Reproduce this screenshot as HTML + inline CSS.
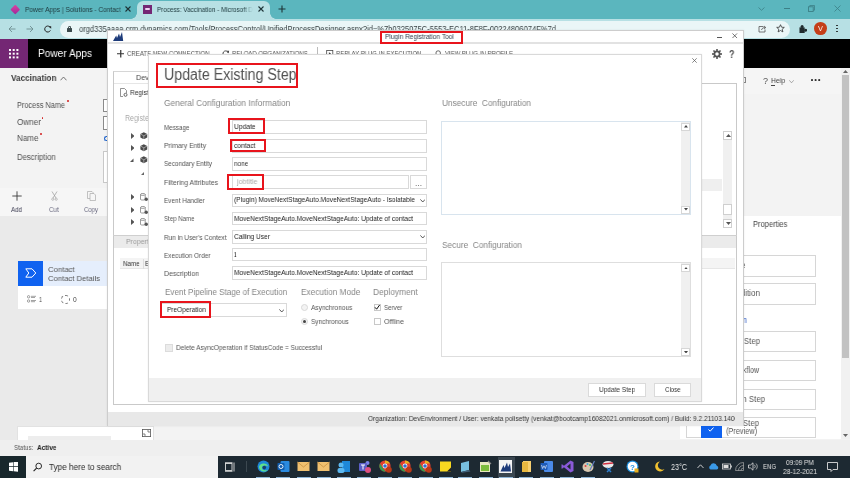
<!DOCTYPE html><html><head><meta charset="utf-8"><style>
html,body{margin:0;padding:0;}
body{width:850px;height:478px;overflow:hidden;position:relative;background:#f3f3f3;font-family:"Liberation Sans",sans-serif;}
.a{position:absolute;box-sizing:border-box;}
.t{position:absolute;white-space:pre;transform-origin:0 0;line-height:1;will-change:transform;}
</style></head><body>

<div class="a" style="left:0px;top:0px;width:850px;height:19px;background:rgb(91,182,190)"></div>
<div class="a" style="left:0px;top:19px;width:850px;height:20px;background:rgb(183,224,228)"></div>
<div class="a" style="left:137px;top:0.5px;width:133px;height:19px;background:rgb(183,224,228);border-radius:6px 6px 0 0"></div>
<div class="a" style="left:131px;top:13px;width:6px;height:6px;background:radial-gradient(circle at 0 0,rgba(183,224,228,0) 5.5px,rgb(183,224,228) 6px)"></div>
<div class="a" style="left:270px;top:13px;width:6px;height:6px;background:radial-gradient(circle at 100% 0,rgba(183,224,228,0) 5.5px,rgb(183,224,228) 6px)"></div>
<div class="a" style="left:12.2px;top:6px;width:6.5px;height:6.5px;background:linear-gradient(135deg,#e040a0,#9c2a9c);transform:rotate(45deg);border-radius:1px"></div>
<div class="t" style="left:24.5px;top:5.8px;font-size:7.2px;color:#203c40;font-weight:normal;transform:scaleX(0.915);">Power Apps | Solutions - Contact</div>
<div class="a" style="left:118px;top:3px;width:8px;height:13px;background:linear-gradient(90deg,rgba(91,182,190,0),rgb(91,182,190))"></div>
<svg class="a" style="left:125.3px;top:6.4px" width="6" height="6" viewBox="0 0 6 6"><path d="M0.5 0.5L5.5 5.5M5.5 0.5L0.5 5.5" stroke="#1d3336" stroke-width="1.1"/></svg>
<div class="a" style="left:143.3px;top:5px;width:8.8px;height:8.5px;background:#742774"></div>
<div class="a" style="left:145px;top:8.2px;width:5.4px;height:2.2px;background:#f0d0f0;border-radius:1px"></div>
<div class="t" style="left:156.8px;top:5.8px;font-size:7.2px;color:#203c40;font-weight:normal;transform:scaleX(0.878);">Process: Vaccination - Microsoft D</div>
<div class="a" style="left:243px;top:3px;width:10px;height:13px;background:linear-gradient(90deg,rgba(183,224,228,0),rgb(183,224,228))"></div>
<svg class="a" style="left:257.5px;top:6.4px" width="6" height="6" viewBox="0 0 6 6"><path d="M0.5 0.5L5.5 5.5M5.5 0.5L0.5 5.5" stroke="#1d3336" stroke-width="1.1"/></svg>
<svg class="a" style="left:277.7px;top:5.4px" width="8" height="8" viewBox="0 0 8 8"><path d="M4 0.5V7.5M0.5 4H7.5" stroke="#1d3336" stroke-width="1.1"/></svg>
<svg class="a" style="left:757.5px;top:6.5px" width="7" height="4" viewBox="0 0 7 4"><path d="M0.5 0.5L3.5 3.3L6.5 0.5" stroke="#3c8087" stroke-width="0.8" fill="none"/></svg>
<div class="a" style="left:783.5px;top:8px;width:6.5px;height:0.9px;background:#3c8087"></div>
<svg class="a" style="left:808px;top:5.3px" width="7" height="7" viewBox="0 0 7 7"><rect x="0.5" y="1.8" width="4.7" height="4.7" stroke="#3c8087" stroke-width="0.9" fill="none"/><path d="M1.8 1.8V0.5H6.5V5.2H5.2" stroke="#3c8087" stroke-width="0.8" fill="none"/></svg>
<svg class="a" style="left:833.5px;top:5px" width="7" height="7" viewBox="0 0 7 7"><path d="M0.5 0.5L6.5 6.5M6.5 0.5L0.5 6.5" stroke="#3c8087" stroke-width="0.8"/></svg>
<svg class="a" style="left:8px;top:24.6px" width="8" height="8" viewBox="0 0 8 8"><path d="M7.5 4H1M4 1L1 4L4 7" stroke="#6d8d90" stroke-width="0.9" fill="none"/></svg>
<svg class="a" style="left:26px;top:24.6px" width="8" height="8" viewBox="0 0 8 8"><path d="M0.5 4H7M4 1L7 4L4 7" stroke="#6d8d90" stroke-width="0.9" fill="none"/></svg>
<svg class="a" style="left:43.5px;top:24.5px" width="8" height="8" viewBox="0 0 8 8"><path d="M6.6 3.2A3 3 0 1 0 6.4 5.4" stroke="#222" stroke-width="1" fill="none"/><path d="M5 1.2L7.2 1.2L7.2 3.6Z" fill="#222"/></svg>
<div class="a" style="left:60px;top:21px;width:730px;height:16.5px;background:rgb(234,246,247);border-radius:8.5px"></div>
<div class="a" style="left:67px;top:28px;width:5px;height:4px;background:#3b4a4c;border-radius:0.5px"></div>
<div class="a" style="left:67.9px;top:25.6px;width:3.2px;height:3.5px;border:0.9px solid #3b4a4c;border-bottom:none;border-radius:2px 2px 0 0"></div>
<div class="t" style="left:78.5px;top:24.78px;font-size:9px;color:#3a4446;font-weight:normal;transform:scaleX(0.839);">orgd335aaaa.crm.dynamics.com/Tools/ProcessControl/UnifiedProcessDesigner.aspx?id=%7b0325075C-5553-EC11-8F8F-00224806074F%7d</div>
<svg class="a" style="left:757.5px;top:24.5px" width="9" height="8" viewBox="0 0 9 8"><path d="M5.5 1.5H1V7H7V4.5" stroke="#555" stroke-width="0.8" fill="none"/><path d="M3.5 5C4 3 5.5 2.5 7.5 2.5M6 1L7.8 2.5L6 4" stroke="#555" stroke-width="0.8" fill="none"/></svg>
<svg class="a" style="left:775.5px;top:24.3px" width="9" height="9" viewBox="0 0 9 9"><path d="M4.5 0.7L5.6 3.2L8.3 3.4L6.2 5.2L6.9 7.9L4.5 6.5L2.1 7.9L2.8 5.2L0.7 3.4L3.4 3.2Z" stroke="#333" stroke-width="0.8" fill="none"/></svg>
<svg class="a" style="left:798.5px;top:24.8px" width="8.5" height="8.5" viewBox="0 0 9 9"><rect x="0.5" y="2.5" width="5.5" height="6" fill="#1f2a2c"/><circle cx="3.3" cy="1.7" r="1.6" fill="#1f2a2c"/><circle cx="7" cy="5.5" r="1.6" fill="#1f2a2c"/></svg>
<div class="a" style="left:814.2px;top:22.3px;width:12.8px;height:12.8px;border-radius:50%;background:rgb(196,62,24)"></div>
<div class="t" style="left:818.3px;top:25.45px;font-size:7.5px;color:#fff;font-weight:normal;transform:scaleX(0.957);">V</div>
<div class="a" style="left:836.3px;top:24.5px;width:1.8px;height:1.8px;border-radius:50%;background:#222;box-shadow:0 3px 0 #222,0 6px 0 #222"></div>
<div class="a" style="left:0px;top:39px;width:850px;height:28.5px;background:#000"></div>
<div class="a" style="left:0px;top:39px;width:28px;height:28.5px;background:rgb(116,39,116)"></div>
<div class="a" style="left:9px;top:48.5px;width:2.4px;height:2.4px;background:#fff;box-shadow:3.7px 0 #fff,7.4px 0 #fff,0 3.7px #fff,3.7px 3.7px #fff,7.4px 3.7px #fff,0 7.4px #fff,3.7px 7.4px #fff,7.4px 7.4px #fff"></div>
<div class="t" style="left:37.7px;top:47.82px;font-size:10.6px;color:#fff;font-weight:normal;transform:scaleX(0.955);">Power Apps</div>
<div class="a" style="left:0px;top:67.5px;width:850px;height:372.5px;background:#f3f3f3"></div>
<div class="t" style="left:11.3px;top:74.48px;font-size:9px;color:#3a3a3a;font-weight:bold;transform:scaleX(0.909);">Vaccination</div>
<svg class="a" style="left:60px;top:75.5px" width="7" height="5" viewBox="0 0 7 5"><path d="M0.5 4.3L3.5 1L6.5 4.3" stroke="#555" stroke-width="0.8" fill="none"/></svg>
<div class="t" style="left:16.9px;top:101.2px;font-size:8.5px;color:#505050;font-weight:normal;transform:scaleX(0.861);">Process Name</div>
<div class="t" style="left:16.9px;top:118px;font-size:8.5px;color:#505050;font-weight:normal;transform:scaleX(0.958);">Owner</div>
<div class="t" style="left:16.9px;top:134.1px;font-size:8.5px;color:#505050;font-weight:normal;transform:scaleX(0.948);">Name</div>
<div class="t" style="left:16.9px;top:152.6px;font-size:8.5px;color:#505050;font-weight:normal;transform:scaleX(0.912);">Description</div>
<div class="a" style="left:67.2px;top:100.2px;width:1.9px;height:1.9px;border-radius:50%;background:#d32020"></div>
<div class="a" style="left:41.6px;top:117px;width:1.9px;height:1.9px;border-radius:50%;background:#d32020"></div>
<div class="a" style="left:39.8px;top:133.4px;width:1.9px;height:1.9px;border-radius:50%;background:#d32020"></div>
<div class="a" style="left:103.3px;top:98.8px;width:8.7px;height:13.4px;background:#fff;border:1px solid #8a8a8a"></div>
<div class="a" style="left:103.3px;top:116px;width:8.7px;height:14px;background:#fff;border:1px solid #8a8a8a"></div>
<div class="a" style="left:103.3px;top:150.6px;width:8.7px;height:32.8px;background:#fff;border:1px solid #c8c8c8"></div>
<div class="a" style="left:104px;top:136px;width:3px;height:5px;border:1px solid #2266cc;border-right:none;border-radius:3px 0 0 3px"></div>
<div class="a" style="left:0px;top:188px;width:107px;height:28px;background:#f6f6f6"></div>
<svg class="a" style="left:11.5px;top:191px" width="10" height="10" viewBox="0 0 10 10"><path d="M5 0.3V9.7M0.3 5H9.7" stroke="#3a3a3a" stroke-width="0.9"/></svg>
<div class="t" style="left:11px;top:205.97px;font-size:7px;color:#3a3a50;font-weight:normal;transform:scaleX(0.882);">Add</div>
<svg class="a" style="left:50.5px;top:191px" width="7" height="10" viewBox="0 0 7 10"><path d="M1 0.5L5 7M6 0.5L2 7" stroke="#9a9a9a" stroke-width="0.7" fill="none"/><circle cx="1.8" cy="8.2" r="1.1" stroke="#9a9a9a" stroke-width="0.6" fill="none"/><circle cx="5.2" cy="8.2" r="1.1" stroke="#9a9a9a" stroke-width="0.6" fill="none"/></svg>
<div class="t" style="left:48.9px;top:205.97px;font-size:7px;color:#6a6a80;font-weight:normal;transform:scaleX(0.880);">Cut</div>
<svg class="a" style="left:86.5px;top:191px" width="9" height="10" viewBox="0 0 9 10"><path d="M0.5 0.5H5L6 1.5V7.5H0.5Z" stroke="#aaa" stroke-width="0.7" fill="none"/><path d="M3 2.5H7L8.5 4V9.5H3Z" stroke="#aaa" stroke-width="0.7" fill="#f6f6f6"/></svg>
<div class="t" style="left:83.9px;top:205.97px;font-size:7px;color:#6a6a80;font-weight:normal;transform:scaleX(0.857);">Copy</div>
<div class="a" style="left:0px;top:216px;width:107px;height:224px;background:#eaeaea"></div>
<div class="a" style="left:17.6px;top:261px;width:89.4px;height:48.3px;background:#fff"></div>
<div class="a" style="left:42.8px;top:261px;width:64.2px;height:24.9px;background:#e5eefc"></div>
<div class="a" style="left:17.6px;top:261px;width:25.2px;height:24.9px;background:#0f62f0"></div>
<svg class="a" style="left:24.5px;top:268px" width="12" height="10" viewBox="0 0 12 10"><path d="M0.8 0.8H7L10.8 5L7 9.2H0.8L3.8 5Z" stroke="#fff" stroke-width="1" fill="none"/></svg>
<div class="t" style="left:48px;top:266.03px;font-size:8px;color:#555;font-weight:normal;transform:scaleX(0.968);">Contact</div>
<div class="t" style="left:48px;top:274.93px;font-size:8px;color:#555;font-weight:normal;transform:scaleX(0.959);">Contact Details</div>
<svg class="a" style="left:27px;top:295px" width="11" height="8" viewBox="0 0 11 8"><circle cx="1.6" cy="1.8" r="1.2" stroke="#666" stroke-width="0.6" fill="none"/><circle cx="1.6" cy="6" r="1.2" stroke="#666" stroke-width="0.6" fill="none"/><path d="M4 1.3H9M4 2.5H8M4 5.5H9M4 6.7H8" stroke="#666" stroke-width="0.6"/></svg>
<div class="t" style="left:38.8px;top:296.5px;font-size:6.5px;color:#444;font-weight:normal;transform:scaleX(0.828);">1</div>
<div class="a" style="left:61.3px;top:294.5px;width:9px;height:9px;border-radius:50%;border:1px dashed #777"></div>
<div class="t" style="left:73.2px;top:296.5px;font-size:6.5px;color:#444;font-weight:normal;transform:scaleX(1.021);">0</div>
<div class="a" style="left:17px;top:425.6px;width:137.4px;height:14.4px;background:#fff;border:1px solid #e2e2e2;border-bottom:none"></div>
<div class="a" style="left:27.9px;top:435.5px;width:82.8px;height:4.5px;background:#ededed"></div>
<svg class="a" style="left:142px;top:429px" width="9" height="8" viewBox="0 0 9 8"><rect x="0.4" y="0.4" width="8.2" height="7.2" stroke="#555" stroke-width="0.8" fill="none"/><path d="M2 4V6H4M5 2H7V4" stroke="#555" stroke-width="0.7" fill="none"/></svg>
<div class="a" style="left:0px;top:440px;width:850px;height:15.5px;background:#efefef"></div>
<div class="t" style="left:13.7px;top:444.25px;font-size:7.5px;color:#555;font-weight:normal;transform:scaleX(0.826);">Status:</div>
<div class="t" style="left:37px;top:444.25px;font-size:7.5px;color:#222;font-weight:bold;transform:scaleX(0.866);">Active</div>
<div class="a" style="left:743px;top:67.5px;width:107px;height:26px;background:#f5f5f5"></div>
<div class="a" style="left:743px;top:77px;width:3px;height:6px;border:0.8px solid #888;border-left:none"></div>
<div class="t" style="left:762.5px;top:76.88px;font-size:9px;color:#555;font-weight:normal;transform:scaleX(0.997);">?</div>
<div class="t" style="left:771.4px;top:77.23px;font-size:8px;color:#444;font-weight:normal;transform:scaleX(0.863);">Help</div>
<div class="a" style="left:771.4px;top:85.2px;width:3.5px;height:0.6px;background:#444"></div>
<svg class="a" style="left:788.5px;top:80px" width="5" height="3.5" viewBox="0 0 5 3.5"><path d="M0.3 0.3L2.5 2.8L4.7 0.3" stroke="#777" stroke-width="0.6" fill="none"/></svg>
<div class="a" style="left:811px;top:79.2px;width:1.7px;height:1.7px;border-radius:50%;background:#333;box-shadow:3.6px 0 #333,7.2px 0 #333"></div>
<div class="a" style="left:841.3px;top:67.5px;width:8.7px;height:371.3px;background:#f1f1f1"></div>
<div class="a" style="left:841.5px;top:75.4px;width:7.3px;height:283.1px;background:#c2c2c2"></div>
<svg class="a" style="left:842.8px;top:69.5px" width="5" height="3" viewBox="0 0 5 3"><path d="M0 3L2.5 0L5 3Z" fill="#666"/></svg>
<svg class="a" style="left:842.8px;top:433.5px" width="5" height="3" viewBox="0 0 5 3"><path d="M0 0L2.5 3L5 0Z" fill="#666"/></svg>
<div class="a" style="left:680px;top:215.6px;width:161.3px;height:223.2px;background:#fff"></div>
<div class="t" style="left:752.6px;top:219.62px;font-size:8.6px;color:#444;font-weight:normal;transform:scaleX(0.878);">Properties</div>
<div class="a" style="left:686px;top:254.5px;width:130.3px;height:22.1px;border:1px solid #d6d6d6;background:#fff"></div>
<div class="a" style="left:686px;top:283.4px;width:130.3px;height:22.1px;border:1px solid #d6d6d6;background:#fff"></div>
<div class="a" style="left:686px;top:330.8px;width:130.3px;height:21.7px;border:1px solid #d6d6d6;background:#fff"></div>
<div class="a" style="left:686px;top:359.5px;width:130.3px;height:21.8px;border:1px solid #d6d6d6;background:#fff"></div>
<div class="a" style="left:686px;top:388.6px;width:130.3px;height:21.8px;border:1px solid #d6d6d6;background:#fff"></div>
<div class="a" style="left:686px;top:417px;width:130.3px;height:21.3px;border:1px solid #d6d6d6;background:#fff"></div>
<div class="t" style="left:723.03px;top:261.22px;font-size:8.6px;color:#555;font-weight:normal;">Stage</div>
<div class="t" style="left:725.7px;top:289.22px;font-size:8.6px;color:#555;font-weight:normal;transform:scaleX(0.936);">Condition</div>
<div class="t" style="left:703.5px;top:315.82px;font-size:8.6px;color:#2050c0;font-weight:normal;transform:scaleX(0.900);">Composition</div>
<div class="t" style="left:719.6px;top:337.22px;font-size:8.6px;color:#555;font-weight:normal;transform:scaleX(0.910);">Action Step</div>
<div class="t" style="left:729.8px;top:365.92px;font-size:8.6px;color:#555;font-weight:normal;transform:scaleX(0.824);">Workflow</div>
<div class="t" style="left:725.3px;top:394.92px;font-size:8.6px;color:#555;font-weight:normal;transform:scaleX(0.910);">Action Step</div>
<div class="t" style="left:718.8px;top:419.12px;font-size:8.6px;color:#555;font-weight:normal;transform:scaleX(0.910);">Action Step</div>
<div class="t" style="left:725.9px;top:427.12px;font-size:8.6px;color:#555;font-weight:normal;transform:scaleX(0.854);">(Preview)</div>
<div class="a" style="left:701px;top:425.4px;width:21.4px;height:12.9px;background:#0f62f0"></div>
<svg class="a" style="left:708px;top:427px" width="6" height="5" viewBox="0 0 6 5"><path d="M0.5 2.5L2.2 4.2L5.5 0.5" stroke="#fff" stroke-width="1" fill="none"/></svg>
<div class="a" style="left:106.5px;top:29.5px;width:637.2px;height:396.8px;background:#fff;border:1px solid #cdcdcd;box-shadow:0 0 2px rgba(0,0,0,0.08)"></div>
<div class="a" style="left:107.5px;top:42.3px;width:635.2px;height:1.3px;background:#e2e2e2"></div>
<svg class="a" style="left:112.5px;top:32px" width="11" height="9" viewBox="0 0 11 9"><path d="M0 9L3.2 3.5L4 6L6 1.5L7 5L9 0L10.2 9Z" fill="#1d3b7a"/></svg>
<div class="a" style="left:380px;top:30.6px;width:83.1px;height:13.1px;border:2px solid #e8141c"></div>
<div class="t" style="left:385.1px;top:32.95px;font-size:7.5px;color:#2c3a4a;font-weight:normal;transform:scaleX(0.875);">Plugin Registration Tool</div>
<div class="a" style="left:717.2px;top:37px;width:4.4px;height:1.2px;background:#555"></div>
<svg class="a" style="left:732px;top:33.3px" width="5.5" height="5.5" viewBox="0 0 6 6"><path d="M0.5 0.5L5.5 5.5M5.5 0.5L0.5 5.5" stroke="#444" stroke-width="0.8"/></svg>
<svg class="a" style="left:116.7px;top:50px" width="7.5" height="7.5" viewBox="0 0 8 8"><path d="M4 0V8M0 4H8" stroke="#333" stroke-width="1.3"/></svg>
<div class="t" style="left:126.7px;top:49.92px;font-size:7.3px;color:#555;font-weight:normal;transform:scaleX(0.832);">CREATE NEW CONNECTION</div>
<svg class="a" style="left:222px;top:50px" width="7.5" height="7" viewBox="0 0 8 8"><path d="M6.8 3.5A3 3 0 1 0 6.3 5.8" stroke="#444" stroke-width="1.1" fill="none"/><path d="M5 0.8L7.8 0.8L7.5 3.8Z" fill="#444"/></svg>
<div class="t" style="left:231.5px;top:49.92px;font-size:7.3px;color:#555;font-weight:normal;transform:scaleX(0.824);">RELOAD ORGANIZATIONS</div>
<div class="a" style="left:317px;top:47px;width:1px;height:9.5px;background:#bbb"></div>
<svg class="a" style="left:326px;top:50px" width="7.5" height="7" viewBox="0 0 8 8"><rect x="0.5" y="0.5" width="7" height="7" stroke="#444" stroke-width="0.9" fill="none"/><path d="M3 2.5L5.5 4L3 5.5Z" fill="#444"/></svg>
<div class="t" style="left:336px;top:49.92px;font-size:7.3px;color:#555;font-weight:normal;transform:scaleX(0.817);">REPLAY PLUG-IN EXECUTION</div>
<svg class="a" style="left:433.8px;top:50px" width="7.5" height="7" viewBox="0 0 8 8"><circle cx="4.5" cy="3.5" r="2.6" stroke="#444" stroke-width="0.9" fill="none"/><path d="M2.5 5.5L0.5 7.5" stroke="#444" stroke-width="1.1"/></svg>
<div class="t" style="left:444.5px;top:49.92px;font-size:7.3px;color:#555;font-weight:normal;transform:scaleX(0.814);">VIEW PLUG-IN PROFILE</div>
<svg class="a" style="left:712px;top:49px" width="10" height="10" viewBox="0 0 10 10"><circle cx="5" cy="5" r="2.6" stroke="#555" stroke-width="1.7" fill="none"/><rect x="4.2" y="0" width="1.6" height="2.4" fill="#555" transform="rotate(0 5 5)"/><rect x="4.2" y="0" width="1.6" height="2.4" fill="#555" transform="rotate(45 5 5)"/><rect x="4.2" y="0" width="1.6" height="2.4" fill="#555" transform="rotate(90 5 5)"/><rect x="4.2" y="0" width="1.6" height="2.4" fill="#555" transform="rotate(135 5 5)"/><rect x="4.2" y="0" width="1.6" height="2.4" fill="#555" transform="rotate(180 5 5)"/><rect x="4.2" y="0" width="1.6" height="2.4" fill="#555" transform="rotate(225 5 5)"/><rect x="4.2" y="0" width="1.6" height="2.4" fill="#555" transform="rotate(270 5 5)"/><rect x="4.2" y="0" width="1.6" height="2.4" fill="#555" transform="rotate(315 5 5)"/></svg>
<div class="t" style="left:728.8px;top:50.13px;font-size:10px;color:#4a4a4a;font-weight:bold;transform:scaleX(0.884);">?</div>
<div class="a" style="left:113.4px;top:83.3px;width:623.2px;height:321.5px;border:1px solid #c9c9c9;background:#fff"></div>
<div class="a" style="left:113.4px;top:70.7px;width:46.6px;height:13.6px;border:1px solid #c9c9c9;border-top:1.5px solid #d6d6d6;border-bottom:none;background:#fff"></div>
<div class="t" style="left:135.9px;top:74.3px;font-size:7.8px;color:#444;font-weight:normal;transform:scaleX(0.929);">Devl</div>
<div class="a" style="left:114.4px;top:83.1px;width:34px;height:1px;background:#e6e6e6"></div>
<svg class="a" style="left:120.3px;top:87.8px" width="8" height="9" viewBox="0 0 8 9"><path d="M0.5 0.5H4.5L6.5 2.5V5M0.5 0.5V8.5H3" stroke="#666" stroke-width="0.7" fill="none"/><circle cx="5.5" cy="6.8" r="1.5" stroke="#555" stroke-width="0.9" fill="none"/></svg>
<div class="t" style="left:129.8px;top:88.65px;font-size:7.5px;color:#333;font-weight:normal;transform:scaleX(0.877);">Register</div>
<div class="t" style="left:124.8px;top:113.26px;font-size:9.5px;color:#a8a8a8;font-weight:normal;transform:scaleX(0.740);">Registered</div>
<svg class="a" style="left:130.6px;top:132.7px" width="3.5" height="6" viewBox="0 0 3.5 6"><path d="M0 0L3.5 3L0 6Z" fill="#555"/></svg>
<svg class="a" style="left:140px;top:131.89999999999998px" width="7.6" height="7.6" viewBox="0 0 8 8"><path d="M4 0.3L7.6 2.1V5.9L4 7.7L0.4 5.9V2.1Z" fill="#4a4a4a"/><path d="M0.6 2.2L4 4L7.4 2.2M4 4V7.6" stroke="#ddd" stroke-width="0.6" fill="none"/></svg>
<svg class="a" style="left:130.6px;top:145px" width="3.5" height="6" viewBox="0 0 3.5 6"><path d="M0 0L3.5 3L0 6Z" fill="#555"/></svg>
<svg class="a" style="left:140px;top:144.2px" width="7.6" height="7.6" viewBox="0 0 8 8"><path d="M4 0.3L7.6 2.1V5.9L4 7.7L0.4 5.9V2.1Z" fill="#4a4a4a"/><path d="M0.6 2.2L4 4L7.4 2.2M4 4V7.6" stroke="#ddd" stroke-width="0.6" fill="none"/></svg>
<svg class="a" style="left:129.8px;top:158.2px" width="4" height="4" viewBox="0 0 4 4"><path d="M0 4H3.5V0.5Z" fill="#555"/></svg>
<svg class="a" style="left:140px;top:156.39999999999998px" width="7.6" height="7.6" viewBox="0 0 8 8"><path d="M4 0.3L7.6 2.1V5.9L4 7.7L0.4 5.9V2.1Z" fill="#4a4a4a"/><path d="M0.6 2.2L4 4L7.4 2.2M4 4V7.6" stroke="#ddd" stroke-width="0.6" fill="none"/></svg>
<svg class="a" style="left:140.5px;top:171.5px" width="3" height="3" viewBox="0 0 3 3"><path d="M0 3H3V0Z" fill="#666"/></svg>
<svg class="a" style="left:130.6px;top:194.4px" width="3.5" height="6" viewBox="0 0 3.5 6"><path d="M0 0L3.5 3L0 6Z" fill="#555"/></svg>
<svg class="a" style="left:140px;top:193.20000000000002px" width="8.5" height="8.5" viewBox="0 0 9 9"><path d="M0.5 1.5V6.8C0.5 7.7 5.5 7.7 5.5 6.8V1.5" stroke="#666" stroke-width="0.7" fill="#fff"/><ellipse cx="3" cy="1.5" rx="2.5" ry="1" stroke="#666" stroke-width="0.7" fill="#fff"/><circle cx="6.6" cy="6.6" r="1.8" fill="#555"/></svg>
<svg class="a" style="left:130.6px;top:206.8px" width="3.5" height="6" viewBox="0 0 3.5 6"><path d="M0 0L3.5 3L0 6Z" fill="#555"/></svg>
<svg class="a" style="left:140px;top:205.60000000000002px" width="8.5" height="8.5" viewBox="0 0 9 9"><path d="M0.5 1.5V6.8C0.5 7.7 5.5 7.7 5.5 6.8V1.5" stroke="#666" stroke-width="0.7" fill="#fff"/><ellipse cx="3" cy="1.5" rx="2.5" ry="1" stroke="#666" stroke-width="0.7" fill="#fff"/><circle cx="6.6" cy="6.6" r="1.8" fill="#555"/></svg>
<svg class="a" style="left:130.6px;top:219.2px" width="3.5" height="6" viewBox="0 0 3.5 6"><path d="M0 0L3.5 3L0 6Z" fill="#555"/></svg>
<svg class="a" style="left:140px;top:218.0px" width="8.5" height="8.5" viewBox="0 0 9 9"><path d="M0.5 1.5V6.8C0.5 7.7 5.5 7.7 5.5 6.8V1.5" stroke="#666" stroke-width="0.7" fill="#fff"/><ellipse cx="3" cy="1.5" rx="2.5" ry="1" stroke="#666" stroke-width="0.7" fill="#fff"/><circle cx="6.6" cy="6.6" r="1.8" fill="#555"/></svg>
<div class="a" style="left:113.4px;top:234.7px;width:623.2px;height:1px;background:#cfcfcf"></div>
<div class="a" style="left:114.4px;top:235.7px;width:621.2px;height:12.2px;background:#ebebeb"></div>
<div class="t" style="left:125.7px;top:237.53px;font-size:8px;color:#9a9a9a;font-weight:normal;transform:scaleX(0.864);">Properties</div>
<div class="a" style="left:120px;top:257.7px;width:615px;height:11.6px;background:#f4f4f4;border-bottom:1px solid #e6e6e6"></div>
<div class="t" style="left:122.8px;top:260.02px;font-size:7.3px;color:#333;font-weight:normal;transform:scaleX(0.848);">Name</div>
<div class="a" style="left:143px;top:258.5px;width:0.7px;height:10.5px;background:#ddd"></div>
<div class="t" style="left:145.4px;top:260.02px;font-size:7.3px;color:#333;font-weight:normal;transform:scaleX(0.821);">E</div>
<div class="a" style="left:701.6px;top:178.6px;width:20.4px;height:12.6px;background:#efefef"></div>
<div class="a" style="left:723.4px;top:131.4px;width:9.1px;height:96.6px;background:#f0f0f0"></div>
<div class="a" style="left:723.4px;top:131.4px;width:9.1px;height:8.2px;background:#fff;border:1px solid #cfcfcf"></div>
<svg class="a" style="left:725.5px;top:134.0px" width="5" height="3" viewBox="0 0 5 3"><path d="M0 3L2.5 0L5 3Z" fill="#555"/></svg>
<div class="a" style="left:723.4px;top:219.3px;width:9.1px;height:8.7px;background:#fff;border:1px solid #cfcfcf"></div>
<svg class="a" style="left:725.5px;top:222.15px" width="5" height="3" viewBox="0 0 5 3"><path d="M0 0L2.5 3L5 0Z" fill="#555"/></svg>
<div class="a" style="left:723.4px;top:204.2px;width:9.1px;height:11.3px;background:#fff;border:1px solid #cfcfcf"></div>
<div class="a" style="left:107.5px;top:411.8px;width:635.2px;height:14px;background:#e8e8e8"></div>
<div class="t" style="left:368px;top:415.15px;font-size:7.5px;color:#333;font-weight:normal;transform:scaleX(0.875);">Organization: DevEnvironment / User: venkata polisetty (venkat@bootcamp16082021.onmicrosoft.com) / Build: 9.2.21103.140</div>
<div class="a" style="left:148.4px;top:53.8px;width:553.3px;height:348.4px;background:#fff;border:1px solid #d9d9d9;box-shadow:0 0 1.5px rgba(0,0,0,0.08)"></div>
<div class="a" style="left:149.4px;top:377.6px;width:551.3px;height:23.6px;background:#f0f0f0"></div>
<svg class="a" style="left:692px;top:58.4px" width="5" height="5" viewBox="0 0 5 5"><path d="M0.3 0.3L4.7 4.7M4.7 0.3L0.3 4.7" stroke="#555" stroke-width="0.7"/></svg>
<div class="a" style="left:156px;top:63.3px;width:141.9px;height:25.1px;border:2px solid #e8141c"></div>
<div class="t" style="left:164.3px;top:67.35px;font-size:16px;color:#525252;font-weight:normal;transform:scaleX(0.887);">Update Existing Step</div>
<div class="t" style="left:164.4px;top:98.58px;font-size:9px;color:#868686;font-weight:normal;transform:scaleX(0.932);">General Configuration Information</div>
<div class="t" style="left:164.3px;top:124.12px;font-size:7.3px;color:#555;font-weight:normal;transform:scaleX(0.858);">Message</div>
<div class="t" style="left:164.3px;top:142.02px;font-size:7.3px;color:#555;font-weight:normal;transform:scaleX(0.925);">Primary Entity</div>
<div class="t" style="left:164.3px;top:160.32px;font-size:7.3px;color:#555;font-weight:normal;transform:scaleX(0.870);">Secondary Entity</div>
<div class="t" style="left:164.3px;top:178.82px;font-size:7.3px;color:#555;font-weight:normal;transform:scaleX(0.925);">Filtering Attributes</div>
<div class="t" style="left:164.3px;top:196.62px;font-size:7.3px;color:#555;font-weight:normal;transform:scaleX(0.882);">Event Handler</div>
<div class="t" style="left:164.3px;top:214.82px;font-size:7.3px;color:#555;font-weight:normal;transform:scaleX(0.835);">Step Name</div>
<div class="t" style="left:164.3px;top:233.62px;font-size:7.3px;color:#555;font-weight:normal;transform:scaleX(0.882);">Run in User&#x27;s Context</div>
<div class="t" style="left:164.3px;top:251.62px;font-size:7.3px;color:#555;font-weight:normal;transform:scaleX(0.882);">Execution Order</div>
<div class="t" style="left:164.3px;top:269.82px;font-size:7.3px;color:#555;font-weight:normal;transform:scaleX(0.959);">Description</div>
<div class="a" style="left:232.2px;top:120.3px;width:195.1px;height:13.5px;border:1px solid #d9d9d9;background:#fff"></div>
<div class="a" style="left:232.2px;top:139px;width:195.1px;height:13.5px;border:1px solid #d9d9d9;background:#fff"></div>
<div class="a" style="left:232.2px;top:157px;width:195.1px;height:13.5px;border:1px solid #d9d9d9;background:#fff"></div>
<div class="a" style="left:232.2px;top:175.4px;width:176.6px;height:13.5px;border:1px solid #d9d9d9;background:#fff"></div>
<div class="a" style="left:232.2px;top:193.5px;width:195.1px;height:13.5px;border:1px solid #d9d9d9;background:#fff"></div>
<div class="a" style="left:232.2px;top:211.8px;width:195.1px;height:13.5px;border:1px solid #d9d9d9;background:#fff"></div>
<div class="a" style="left:232.2px;top:230.1px;width:195.1px;height:13.5px;border:1px solid #d9d9d9;background:#fff"></div>
<div class="a" style="left:232.2px;top:247.9px;width:195.1px;height:13.5px;border:1px solid #d9d9d9;background:#fff"></div>
<div class="a" style="left:232.2px;top:266.2px;width:195.1px;height:13.5px;border:1px solid #d9d9d9;background:#fff"></div>
<div class="a" style="left:410px;top:175.4px;width:17.3px;height:13.5px;border:1px solid #d9d9d9;background:#fff"></div>
<div class="t" style="left:415.2px;top:179.82px;font-size:7.3px;color:#333;font-weight:normal;transform:scaleX(1.149);">...</div>
<div class="t" style="left:234.2px;top:123.17px;font-size:7.6px;color:#222;font-weight:normal;transform:scaleX(0.878);">Update</div>
<div class="t" style="left:234.2px;top:141.87px;font-size:7.6px;color:#222;font-weight:normal;transform:scaleX(0.878);">contact</div>
<div class="t" style="left:234.2px;top:159.87px;font-size:7.6px;color:#333;font-weight:normal;transform:scaleX(0.846);">none</div>
<div class="t" style="left:236.8px;top:178.27px;font-size:7.6px;color:#aaa;font-weight:normal;transform:scaleX(0.929);">jobtitle</div>
<div class="t" style="left:234.2px;top:196.37px;font-size:7.6px;color:#222;font-weight:normal;transform:scaleX(0.866);">(Plugin) MoveNextStageAuto.MoveNextStageAuto - Isolatable</div>
<div class="t" style="left:234.2px;top:214.67px;font-size:7.6px;color:#222;font-weight:normal;transform:scaleX(0.873);">MoveNextStageAuto.MoveNextStageAuto: Update of contact</div>
<div class="t" style="left:234.2px;top:232.97px;font-size:7.6px;color:#222;font-weight:normal;transform:scaleX(0.870);">Calling User</div>
<div class="t" style="left:234.2px;top:250.77px;font-size:7.6px;color:#222;font-weight:normal;transform:scaleX(0.590);">1</div>
<div class="t" style="left:234.2px;top:269.07px;font-size:7.6px;color:#222;font-weight:normal;transform:scaleX(0.873);">MoveNextStageAuto.MoveNextStageAuto: Update of contact</div>
<svg class="a" style="left:419.5px;top:198.8px" width="5.5" height="3.5" viewBox="0 0 5.5 3.5"><path d="M0.4 0.4L2.75 3L5.1 0.4" stroke="#333" stroke-width="0.8" fill="none"/></svg>
<svg class="a" style="left:419.5px;top:235.4px" width="5.5" height="3.5" viewBox="0 0 5.5 3.5"><path d="M0.4 0.4L2.75 3L5.1 0.4" stroke="#333" stroke-width="0.8" fill="none"/></svg>
<div class="a" style="left:227.5px;top:118.4px;width:37.4px;height:15.5px;border:2px solid #e8141c"></div>
<div class="a" style="left:230px;top:138.5px;width:36px;height:13.3px;border:2px solid #e8141c"></div>
<div class="a" style="left:227px;top:174.3px;width:36.9px;height:15.6px;border:2px solid #e8141c"></div>
<div class="t" style="left:441.8px;top:98.58px;font-size:9px;color:#868686;font-weight:normal;transform:scaleX(0.917);">Unsecure  Configuration</div>
<div class="a" style="left:441.4px;top:120.9px;width:249.6px;height:94.1px;border:1px solid #d8e4ee;background:#fff"></div>
<div class="t" style="left:441.8px;top:240.58px;font-size:9px;color:#868686;font-weight:normal;transform:scaleX(0.919);">Secure  Configuration</div>
<div class="a" style="left:441.4px;top:262.4px;width:249.6px;height:94.8px;border:1px solid #dedede;background:#fff"></div>
<div class="a" style="left:681px;top:121.9px;width:9px;height:92.1px;background:#f0f0f0"></div>
<div class="a" style="left:681px;top:122.5px;width:9px;height:8.2px;background:#fff;border:1px solid #d6d6d6"></div>
<svg class="a" style="left:683.5px;top:125.2px" width="4" height="2.6" viewBox="0 0 4 2.6"><path d="M0 2.6L2 0L4 2.6Z" fill="#444"/></svg>
<div class="a" style="left:681px;top:205.5px;width:9px;height:8.2px;background:#fff;border:1px solid #d6d6d6"></div>
<svg class="a" style="left:683.5px;top:208.4px" width="4" height="2.6" viewBox="0 0 4 2.6"><path d="M0 0L2 2.6L4 0Z" fill="#444"/></svg>
<div class="a" style="left:681px;top:263.4px;width:9px;height:92.8px;background:#f0f0f0"></div>
<div class="a" style="left:681px;top:264px;width:9px;height:8.2px;background:#fff;border:1px solid #d6d6d6"></div>
<svg class="a" style="left:683.5px;top:266.7px" width="4" height="2.6" viewBox="0 0 4 2.6"><path d="M0 2.6L2 0L4 2.6Z" fill="#444"/></svg>
<div class="a" style="left:681px;top:347.7px;width:9px;height:8.2px;background:#fff;border:1px solid #d6d6d6"></div>
<svg class="a" style="left:683.5px;top:350.59999999999997px" width="4" height="2.6" viewBox="0 0 4 2.6"><path d="M0 0L2 2.6L4 0Z" fill="#444"/></svg>
<div class="t" style="left:164.5px;top:288.08px;font-size:9px;color:#868686;font-weight:normal;transform:scaleX(0.902);">Event Pipeline Stage of Execution</div>
<div class="a" style="left:160.6px;top:303px;width:126.5px;height:14px;border:1px solid #d9d9d9;background:#fff"></div>
<svg class="a" style="left:278.8px;top:308.8px" width="5.5" height="3.5" viewBox="0 0 5.5 3.5"><path d="M0.4 0.4L2.75 3L5.1 0.4" stroke="#333" stroke-width="0.8" fill="none"/></svg>
<div class="t" style="left:166.8px;top:305.97px;font-size:7.6px;color:#222;font-weight:normal;transform:scaleX(0.859);">PreOperation</div>
<div class="a" style="left:160px;top:300.6px;width:50.9px;height:17.4px;border:2px solid #e8141c"></div>
<div class="t" style="left:300.9px;top:288.08px;font-size:9px;color:#868686;font-weight:normal;transform:scaleX(0.919);">Execution Mode</div>
<div class="t" style="left:373.3px;top:288.08px;font-size:9px;color:#868686;font-weight:normal;transform:scaleX(0.931);">Deployment</div>
<div class="a" style="left:301px;top:303.8px;width:7.2px;height:7.2px;border-radius:50%;background:#f3f3f3;border:1px solid #d8d8d8"></div>
<div class="a" style="left:301px;top:318.2px;width:7.2px;height:7.2px;border-radius:50%;background:#f3f3f3;border:1px solid #d8d8d8"></div>
<div class="a" style="left:303.1px;top:320.3px;width:3px;height:3px;border-radius:50%;background:#444"></div>
<div class="t" style="left:311.2px;top:304.02px;font-size:7.3px;color:#555;font-weight:normal;transform:scaleX(0.895);">Asynchronous</div>
<div class="t" style="left:311.2px;top:318.42px;font-size:7.3px;color:#555;font-weight:normal;transform:scaleX(0.883);">Synchronous</div>
<div class="a" style="left:373.8px;top:303.8px;width:7.2px;height:7.2px;border:1px solid #c8c8c8;background:#fff"></div>
<svg class="a" style="left:374.3px;top:304.3px" width="6.5" height="6.5" viewBox="0 0 6.5 6.5"><path d="M1 3.3L2.6 5.2L5.6 1" stroke="#111" stroke-width="1" fill="none"/></svg>
<div class="a" style="left:373.8px;top:318.3px;width:7.2px;height:7.2px;border:1px solid #c8c8c8;background:#fff"></div>
<div class="t" style="left:383.9px;top:304.02px;font-size:7.3px;color:#555;font-weight:normal;transform:scaleX(0.860);">Server</div>
<div class="t" style="left:383.9px;top:318.42px;font-size:7.3px;color:#555;font-weight:normal;transform:scaleX(0.949);">Offline</div>
<div class="a" style="left:165px;top:344.4px;width:7.6px;height:7.2px;border:1px solid #dcdcdc;background:#ececec"></div>
<div class="t" style="left:175.6px;top:344.42px;font-size:7.3px;color:#555;font-weight:normal;transform:scaleX(0.890);">Delete AsyncOperation if StatusCode = Successful</div>
<div class="a" style="left:588.2px;top:383.2px;width:57.4px;height:13.4px;border:1px solid #dadada;background:#fff"></div>
<div class="t" style="left:598.8px;top:386.45px;font-size:7.5px;color:#333;font-weight:normal;transform:scaleX(0.868);">Update Step</div>
<div class="a" style="left:654.4px;top:383.2px;width:36.5px;height:13.4px;border:1px solid #dadada;background:#fff"></div>
<div class="t" style="left:665px;top:386.45px;font-size:7.5px;color:#333;font-weight:normal;transform:scaleX(0.808);">Close</div>
<div class="a" style="left:0px;top:455.5px;width:850px;height:22.5px;background:rgb(29,41,50)"></div>
<div class="a" style="left:0px;top:455.5px;width:26.4px;height:22.5px;background:rgb(24,39,44)"></div>
<svg class="a" style="left:8.9px;top:462.4px" width="9.5" height="9.5" viewBox="0 0 10 10"><path d="M0 0.8L4.4 0.2V4.6H0ZM5 0.1L10 -0.5V4.6H5ZM0 5.2H4.4V9.7L0 9.1ZM5 5.2H10V10.3L5 9.8Z" fill="#fff"/></svg>
<div class="a" style="left:26.4px;top:455.5px;width:191.2px;height:22.5px;background:#f2f2f2"></div>
<svg class="a" style="left:33px;top:462px" width="9.5" height="10" viewBox="0 0 10 10"><circle cx="6" cy="4" r="3" stroke="#222" stroke-width="1" fill="none"/><path d="M3.8 6.2L0.6 9.4" stroke="#222" stroke-width="1.2"/></svg>
<div class="t" style="left:49px;top:462.73px;font-size:9.3px;color:#2a2a2a;font-weight:normal;transform:scaleX(0.879);">Type here to search</div>
<svg class="a" style="left:224.5px;top:462px" width="11" height="10" viewBox="0 0 11 10"><rect x="0.5" y="1.5" width="6.5" height="7" stroke="#ddd" stroke-width="0.9" fill="none"/><path d="M9 0.5V9.5M0 0.3H7.5M0 9.7H7.5" stroke="#ddd" stroke-width="0.9"/></svg>
<div class="a" style="left:246.2px;top:461px;width:0.8px;height:11px;background:#3c4850"></div>
<svg class="a" style="left:256.9px;top:460.0px" width="13" height="13" viewBox="0 0 13 13"><circle cx="6.5" cy="6.5" r="6" fill="#1e88d8"/><path d="M2 7.5C2 3 10 2 11 6.5C9 5 5 5 5 8C5 10.5 9 11 11 9.5C9.5 12.5 3 12.5 2 7.5Z" fill="#5fe08a"/><circle cx="7.3" cy="7.6" r="1.8" fill="#1a3f6a"/></svg>
<div class="a" style="left:256.4px;top:476.8px;width:14px;height:1.2px;background:#8fb6d8"></div>
<svg class="a" style="left:276.8px;top:460.0px" width="13" height="13" viewBox="0 0 13 13"><rect x="3.5" y="1" width="9" height="11" rx="1" fill="#2a8ae0"/><rect x="0.5" y="3" width="7" height="7" rx="0.8" fill="#0f5db0"/><circle cx="4" cy="6.5" r="2" stroke="#fff" stroke-width="0.9" fill="none"/></svg>
<div class="a" style="left:276.3px;top:476.8px;width:14px;height:1.2px;background:#8fb6d8"></div>
<svg class="a" style="left:297.0px;top:460.0px" width="13" height="13" viewBox="0 0 13 13"><rect x="0.5" y="2" width="12" height="9" fill="#f0c070"/><path d="M0.5 2L6.5 7L12.5 2" stroke="#c89040" stroke-width="0.8" fill="none"/></svg>
<div class="a" style="left:296.5px;top:476.8px;width:14px;height:1.2px;background:#8fb6d8"></div>
<svg class="a" style="left:317.2px;top:460.0px" width="13" height="13" viewBox="0 0 13 13"><rect x="0.5" y="2" width="12" height="9" fill="#f0c070"/><path d="M0.5 2L6.5 7L12.5 2" stroke="#c89040" stroke-width="0.8" fill="none"/></svg>
<div class="a" style="left:316.7px;top:476.8px;width:14px;height:1.2px;background:#8fb6d8"></div>
<svg class="a" style="left:337.1px;top:460.0px" width="13" height="13" viewBox="0 0 13 13"><rect x="5" y="1" width="8" height="11" fill="#1e88d8"/><circle cx="4" cy="5" r="2.5" fill="#5cb8f0"/><rect x="0.5" y="8" width="7" height="5" rx="2" fill="#5cb8f0"/></svg>
<div class="a" style="left:336.6px;top:476.8px;width:14px;height:1.2px;background:#8fb6d8"></div>
<svg class="a" style="left:357.8px;top:460.0px" width="13" height="13" viewBox="0 0 13 13"><circle cx="9.5" cy="3" r="2" fill="#7b83eb"/><rect x="1" y="3" width="8" height="8" rx="1" fill="#5b5fc7"/><path d="M3 5H7M5 5V9.5" stroke="#fff" stroke-width="1"/><circle cx="10" cy="10" r="3" fill="#e05080"/></svg>
<div class="a" style="left:357.3px;top:476.8px;width:14px;height:1.2px;background:#8fb6d8"></div>
<svg class="a" style="left:378.5px;top:460.0px" width="13" height="13" viewBox="0 0 13 13"><circle cx="6" cy="6" r="5.6" fill="#e04030"/><path d="M6 0.4A5.6 5.6 0 0 1 11 3.5H6Z" fill="#e8b020"/><path d="M1 3.5L3.8 8.2L6.5 11.6A5.6 5.6 0 0 1 1 3.5Z" fill="#30a050"/><circle cx="6" cy="6" r="2.4" fill="#fff"/><circle cx="6" cy="6" r="1.8" fill="#3070d0"/><circle cx="9.8" cy="9.8" r="3" fill="#b83818"/></svg>
<div class="a" style="left:378px;top:476.8px;width:14px;height:1.2px;background:#8fb6d8"></div>
<svg class="a" style="left:398.7px;top:460.0px" width="13" height="13" viewBox="0 0 13 13"><circle cx="6" cy="6" r="5.6" fill="#e04030"/><path d="M6 0.4A5.6 5.6 0 0 1 11 3.5H6Z" fill="#e8b020"/><path d="M1 3.5L3.8 8.2L6.5 11.6A5.6 5.6 0 0 1 1 3.5Z" fill="#30a050"/><circle cx="6" cy="6" r="2.4" fill="#fff"/><circle cx="6" cy="6" r="1.8" fill="#3070d0"/><circle cx="9.8" cy="9.8" r="3" fill="#b83818"/></svg>
<div class="a" style="left:398.2px;top:476.8px;width:14px;height:1.2px;background:#8fb6d8"></div>
<svg class="a" style="left:419.0px;top:460.0px" width="13" height="13" viewBox="0 0 13 13"><circle cx="6" cy="6" r="5.6" fill="#e04030"/><path d="M6 0.4A5.6 5.6 0 0 1 11 3.5H6Z" fill="#e8b020"/><path d="M1 3.5L3.8 8.2L6.5 11.6A5.6 5.6 0 0 1 1 3.5Z" fill="#30a050"/><circle cx="6" cy="6" r="2.4" fill="#fff"/><circle cx="6" cy="6" r="1.8" fill="#3070d0"/><circle cx="9.8" cy="9.8" r="3" fill="#b83818"/></svg>
<div class="a" style="left:418.5px;top:476.8px;width:14px;height:1.2px;background:#8fb6d8"></div>
<svg class="a" style="left:439.0px;top:460.0px" width="13" height="13" viewBox="0 0 13 13"><rect x="1" y="1.5" width="11" height="10" fill="#f8d820"/><path d="M8 11.5L12 7.5V11.5Z" fill="#222"/></svg>
<div class="a" style="left:438.5px;top:476.8px;width:14px;height:1.2px;background:#8fb6d8"></div>
<svg class="a" style="left:458.6px;top:460.0px" width="13" height="13" viewBox="0 0 13 13"><path d="M2 3L10 1V10L2 12Z" fill="#78c0e0"/><path d="M2 12L10 10L11.5 11.5L3 12.8Z" fill="#40607a"/></svg>
<div class="a" style="left:458.1px;top:476.8px;width:14px;height:1.2px;background:#8fb6d8"></div>
<svg class="a" style="left:479.1px;top:460.0px" width="13" height="13" viewBox="0 0 13 13"><rect x="1" y="2" width="10" height="10" fill="#e8e8c0"/><rect x="2" y="5" width="8" height="6" fill="#7cbc3c"/><path d="M9 1L12 4" stroke="#888" stroke-width="1.2"/></svg>
<div class="a" style="left:478.6px;top:476.8px;width:14px;height:1.2px;background:#8fb6d8"></div>
<div class="a" style="left:497.5px;top:456.5px;width:17.3px;height:21.5px;background:#3a4650"></div>
<svg class="a" style="left:499.3px;top:460.0px" width="13" height="13" viewBox="0 0 13 13"><rect x="0" y="0" width="13" height="13" fill="#f4f4f4"/><path d="M1.5 11.5L4.5 5L5.5 8L8 2.5L9 7L11 3.5L12 11.5Z" fill="#1d3b7a"/></svg>
<div class="a" style="left:498.8px;top:476.8px;width:14px;height:1.2px;background:#8fb6d8"></div>
<svg class="a" style="left:519.5px;top:460.0px" width="13" height="13" viewBox="0 0 13 13"><rect x="3" y="1" width="8" height="11" fill="#f8d070"/><rect x="2" y="2" width="6" height="10" fill="#e8b840"/></svg>
<div class="a" style="left:519px;top:476.8px;width:14px;height:1.2px;background:#8fb6d8"></div>
<svg class="a" style="left:540.1px;top:460.0px" width="13" height="13" viewBox="0 0 13 13"><rect x="4" y="1" width="9" height="11" rx="1" fill="#4a8ae8"/><rect x="0.5" y="3" width="7" height="7" rx="0.8" fill="#1d5ab8"/><path d="M1.5 5L2.6 8.5L4 5.8L5.4 8.5L6.5 5" stroke="#fff" stroke-width="0.6" fill="none"/></svg>
<div class="a" style="left:539.6px;top:476.8px;width:14px;height:1.2px;background:#8fb6d8"></div>
<svg class="a" style="left:560.8px;top:460.0px" width="13" height="13" viewBox="0 0 13 13"><path d="M9.5 0.5L12.5 2V11L9.5 12.5L3 7.2L1 8.8L0.5 8.5V4.5L1 4.2L3 5.8ZM9.5 3.5L6 6.5L9.5 9.5Z" fill="#8a5ad8"/></svg>
<div class="a" style="left:560.3px;top:476.8px;width:14px;height:1.2px;background:#8fb6d8"></div>
<svg class="a" style="left:581.5px;top:460.0px" width="13" height="13" viewBox="0 0 13 13"><ellipse cx="6" cy="7" rx="5.5" ry="5" fill="#d8c8b0"/><circle cx="3.5" cy="6" r="1" fill="#e04040"/><circle cx="5.5" cy="4" r="1" fill="#40a0e0"/><circle cx="8" cy="5" r="1" fill="#40c060"/><path d="M8 10L12.5 1" stroke="#6080c0" stroke-width="1.2"/></svg>
<div class="a" style="left:581px;top:476.8px;width:14px;height:1.2px;background:#8fb6d8"></div>
<svg class="a" style="left:601.5px;top:460.0px" width="13" height="13" viewBox="0 0 13 13"><ellipse cx="6" cy="4.5" rx="5.5" ry="3.5" fill="#e8e8e8"/><path d="M1 4L11 3" stroke="#d03040" stroke-width="1.5"/><path d="M5 8L9 12M9 8L5 12" stroke="#3080d0" stroke-width="1.5"/></svg>
<svg class="a" style="left:625.7px;top:460.0px" width="13" height="13" viewBox="0 0 13 13"><circle cx="6.5" cy="6.5" r="6" fill="#1e90e0"/><circle cx="6.5" cy="6.5" r="4.8" fill="#fff"/><text x="6.5" y="9.5" font-size="8" font-weight="bold" text-anchor="middle" fill="#1e90e0" font-family="Liberation Sans">?</text><rect x="8.5" y="8.5" width="4" height="4" fill="#e8b020"/></svg>
<svg class="a" style="left:655px;top:461px" width="10" height="11" viewBox="0 0 10 11"><path d="M5 0.5A5 5 0 1 0 9.5 8A4 4 0 0 1 5 0.5Z" fill="#f0c030"/></svg>
<div class="t" style="left:670.9px;top:462.68px;font-size:9px;color:#e8e8e8;font-weight:normal;transform:scaleX(0.806);">23°C</div>
<svg class="a" style="left:696.5px;top:463.5px" width="7" height="4.5" viewBox="0 0 7 4.5"><path d="M0.5 4L3.5 0.8L6.5 4" stroke="#ddd" stroke-width="0.9" fill="none"/></svg>
<svg class="a" style="left:708px;top:462.5px" width="11" height="7" viewBox="0 0 11 7"><path d="M2.5 6.5A2.2 2.2 0 0 1 2.5 2.5A3.3 3.3 0 0 1 8.8 2.8A1.9 1.9 0 0 1 8.8 6.5Z" fill="#3a9ae8"/></svg>
<svg class="a" style="left:722px;top:463px" width="10" height="7" viewBox="0 0 10 7"><rect x="0.5" y="1" width="8" height="5" stroke="#ddd" stroke-width="0.8" fill="none"/><rect x="1.5" y="2" width="5" height="3" fill="#ddd"/><rect x="8.8" y="2.5" width="1" height="2" fill="#ddd"/></svg>
<svg class="a" style="left:735px;top:461.5px" width="10" height="9" viewBox="0 0 10 9"><path d="M0.5 8.5A8 8 0 0 1 8.5 0.5V8.5Z" stroke="#aaa" stroke-width="0.7" fill="none"/><path d="M3.5 8.5A5 5 0 0 1 8.5 3.5M6 8.5A2.5 2.5 0 0 1 8.5 6" stroke="#aaa" stroke-width="0.7" fill="none"/></svg>
<svg class="a" style="left:748px;top:462px" width="10" height="9" viewBox="0 0 10 9"><path d="M0.5 3H2.5L5 0.8V8.2L2.5 6H0.5Z" stroke="#ddd" stroke-width="0.8" fill="none"/><path d="M6.5 2.8A2.5 2.5 0 0 1 6.5 6.2M8 1.5A4.2 4.2 0 0 1 8 7.5" stroke="#ddd" stroke-width="0.7" fill="none"/></svg>
<div class="t" style="left:763.4px;top:463.45px;font-size:7.5px;color:#e0e0e0;font-weight:normal;transform:scaleX(0.799);">ENG</div>
<div class="t" style="left:786.4px;top:458.65px;font-size:7.5px;color:#e0e0e0;font-weight:normal;transform:scaleX(0.869);">09:09 PM</div>
<div class="t" style="left:783px;top:467.65px;font-size:7.5px;color:#e0e0e0;font-weight:normal;transform:scaleX(0.886);">28-12-2021</div>
<svg class="a" style="left:826.5px;top:461.5px" width="11" height="10" viewBox="0 0 11 10"><path d="M0.5 0.5H10.5V7.5H6L4 9.5V7.5H0.5Z" stroke="#ddd" stroke-width="0.9" fill="none"/></svg>
</body></html>
